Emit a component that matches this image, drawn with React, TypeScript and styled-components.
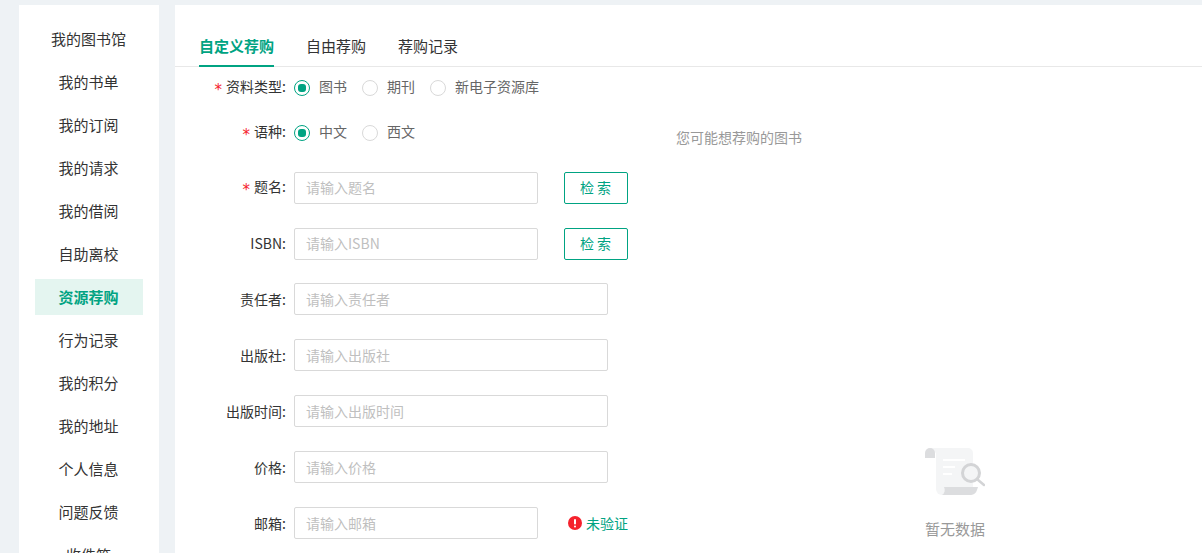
import React from "react";
import styled, { createGlobalStyle } from "styled-components";

const Global = createGlobalStyle`
  html, body { margin: 0; padding: 0; height: 553px; overflow: hidden; background: #eef2f5; }
  body { font-family: "Noto Sans CJK SC", "Liberation Sans", sans-serif; font-size: 14px; color: #333; }
  * { box-sizing: border-box; }
`;

const Page = styled.div`
  display: flex;
  gap: 16px;
  height: 553px;
  padding: 5px 0 0 19px;
  overflow: hidden;
`;
const Sidebar = styled.nav`
  flex: 0 0 140px;
  background: #fff;
  padding: 16px 16px 0;
  display: flex;
  flex-direction: column;
  gap: 7px;
  overflow: hidden;
`;
const NavItem = styled.div<{ $active?: boolean }>`
  flex: 0 0 36px;
  line-height: 35px;
  padding-right: 1px;
  text-align: center;
  font-size: 15px;
  color: ${(p) => (p.$active ? "#00a382" : "#333")};
  background: ${(p) => (p.$active ? "#e4f5f0" : "transparent")};
  font-weight: ${(p) => (p.$active ? 700 : 400)};
`;
const Main = styled.main`
  flex: 1;
  background: #fff;
  padding-top: 24px;
  min-width: 0;
`;
const Tabs = styled.div`
  display: flex;
  gap: 32px;
  height: 38px;
  padding-left: 24px;
  border-bottom: 1px solid #e8e8e8;
`;
const Tab = styled.div<{ $active?: boolean }>`
  height: 38px;
  line-height: 33px;
  font-size: 15px;
  color: ${(p) => (p.$active ? "#00a382" : "#333")};
  font-weight: ${(p) => (p.$active ? 700 : 400)};
  border-bottom: 2px solid ${(p) => (p.$active ? "#00a382" : "transparent")};
`;
const Content = styled.div`
  display: flex;
`;
const Form = styled.div`
  flex: 0 0 501px;
  display: flex;
  flex-direction: column;
  padding-top: 5px;
`;
const Row = styled.div<{ $h: number }>`
  display: flex;
  align-items: center;
  height: 32px;
  margin-bottom: ${(p) => p.$h}px;
`;
const Label = styled.label<{ $low?: boolean }>`
  flex: 0 0 119px;
  padding: 0 8px ${(p) => (p.$low ? 1 : 3)}px 0;
  text-align: right;
  font-size: 14px;
  color: #333;
  white-space: nowrap;
`;
const Star = styled.span`
  color: #f5222d;
  margin-right: 4px;
  font-family: "DejaVu Sans", sans-serif;
  font-size: 15px;
  vertical-align: -3px;
  line-height: 1;
`;
const RadioItem = styled.span`
  display: inline-flex;
  align-items: center;
  margin-right: 15px;
  font-size: 14px;
  color: #666;
`;
const RadioText = styled.span`
  padding-bottom: 5px;
`;
const RadioCircle = styled.span<{ $on?: boolean }>`
  width: 16px;
  height: 16px;
  border-radius: 50%;
  border: 1px solid ${(p) => (p.$on ? "#00a382" : "#d9d9d9")};
  margin-right: 9px;
  display: inline-flex;
  align-items: center;
  justify-content: center;
  &::after {
    content: "";
    display: ${(p) => (p.$on ? "block" : "none")};
    width: 8px;
    height: 8px;
    border-radius: 3px;
    background: #00a382;
  }
`;
const Input = styled.input<{ $w: number; $low?: boolean }>`
  width: ${(p) => p.$w}px;
  height: 32px;
  border: 1px solid #d9d9d9;
  border-radius: 2px;
  padding: 0 12px ${(p) => (p.$low ? 0 : 2)}px 11px;
  font-family: inherit;
  font-size: 14px;
  outline: none;
  &::placeholder { color: #bfbfbf; }
`;
const SearchButton = styled.button`
  width: 64px;
  height: 32px;
  margin-left: 26px;
  border: 1px solid #00a382;
  border-radius: 2px;
  background: #fff;
  color: #00a382;
  font-family: inherit;
  font-size: 14px;
  padding: 0 1px 3px 0;
`;
const Verify = styled.span`
  display: inline-flex;
  align-items: center;
  gap: 4px;
  margin-left: 30px;
  color: #00a382;
  font-size: 14px;
`;
const VerifyText = styled.span`
  padding-bottom: 1px;
`;
const Side = styled.aside`
  flex: 1;
  display: flex;
  flex-direction: column;
  padding-top: 61px;
`;
const SideTitle = styled.div`
  font-size: 14px;
  line-height: 18px;
  color: #999;
`;
const Empty = styled.div`
  width: 558px;
  margin-top: 301px;
  display: flex;
  flex-direction: column;
  align-items: center;
  color: #999;
  font-size: 15px;
  gap: 24px;
`;
const EmptyText = styled.div`
  line-height: 20px;
`;

const navItems = ["我的图书馆","我的书单","我的订阅","我的请求","我的借阅","自助离校","资源荐购","行为记录","我的积分","我的地址","个人信息","问题反馈","收件箱"];

const EmptyIcon = () => (
  <svg width="60" height="48" viewBox="0 0 60 48">
    <path d="M5 1h38a5 5 0 0 1 5 5v34H11v-34z" fill="#f4f5f6" />
    <path d="M11 30v12a6 6 0 0 0 6 6h30V30z" fill="#f4f5f6" />
    <path d="M0 11V6a5 5 0 0 1 5-5 5 5 0 0 1 5 5v5z" fill="#dcdddf" />
    <path d="M19 40h34l-1 3a7 7 0 0 1-6 5H17a6 6 0 0 0 2-8z" fill="#dcdddf" />
    <path d="M18 12h22v2H18zM18 19h12v2H18zM18 26h9v2H18z" fill="#fff" />
    <circle cx="46" cy="26" r="8.500" fill="#f4f5f6" stroke="#d3d4d6" strokeWidth="3" />
    <path d="M52.500 32.500L59 38" stroke="#d3d4d6" strokeWidth="2.500" strokeLinecap="round" />
  </svg>
);

const Alert = () => (
  <svg width="14" height="14" viewBox="0 0 14 14">
    <circle cx="7" cy="7" r="7" fill="#f5222d" />
    <rect x="6" y="3" width="2" height="5.500" rx="1" fill="#fff" />
    <circle cx="7" cy="10.500" r="1" fill="#fff" />
  </svg>
);

const Radio = ({ on, text }: { on?: boolean; text: string }) => (
  <RadioItem>
    <RadioCircle $on={on} />
    <RadioText>{text}</RadioText>
  </RadioItem>
);

export default function App() {
  return (
    <>
      <Global />
      <Page>
        <Sidebar>
          {navItems.map((n) => (
            <NavItem key={n} $active={n === "资源荐购"}>{n}</NavItem>
          ))}
        </Sidebar>
        <Main>
          <Tabs>
            <Tab $active>自定义荐购</Tab>
            <Tab>自由荐购</Tab>
            <Tab>荐购记录</Tab>
          </Tabs>
          <Content>
            <Form>
              <Row $h={13}>
                <Label><Star>*</Star>资料类型:</Label>
                <Radio on text="图书" />
                <Radio text="期刊" />
                <Radio text="新电子资源库" />
              </Row>
              <Row $h={23}>
                <Label><Star>*</Star>语种:</Label>
                <Radio on text="中文" />
                <Radio text="西文" />
              </Row>
              <Row $h={24}>
                <Label><Star>*</Star>题名:</Label>
                <Input $w={244} placeholder="请输入题名" />
                <SearchButton>检 索</SearchButton>
              </Row>
              <Row $h={23}>
                <Label>ISBN:</Label>
                <Input $w={244} placeholder="请输入ISBN" />
                <SearchButton>检 索</SearchButton>
              </Row>
              <Row $h={24}>
                <Label $low>责任者:</Label>
                <Input $low $w={314} placeholder="请输入责任者" />
              </Row>
              <Row $h={24}>
                <Label $low>出版社:</Label>
                <Input $low $w={314} placeholder="请输入出版社" />
              </Row>
              <Row $h={24}>
                <Label $low>出版时间:</Label>
                <Input $low $w={314} placeholder="请输入出版时间" />
              </Row>
              <Row $h={24}>
                <Label $low>价格:</Label>
                <Input $low $w={314} placeholder="请输入价格" />
              </Row>
              <Row $h={24}>
                <Label $low>邮箱:</Label>
                <Input $low $w={244} placeholder="请输入邮箱" />
                <Verify><Alert /><VerifyText>未验证</VerifyText></Verify>
              </Row>
            </Form>
            <Side>
              <SideTitle>您可能想荐购的图书</SideTitle>
              <Empty>
                <EmptyIcon />
                <EmptyText>暂无数据</EmptyText>
              </Empty>
            </Side>
          </Content>
        </Main>
      </Page>
    </>
  );
}
